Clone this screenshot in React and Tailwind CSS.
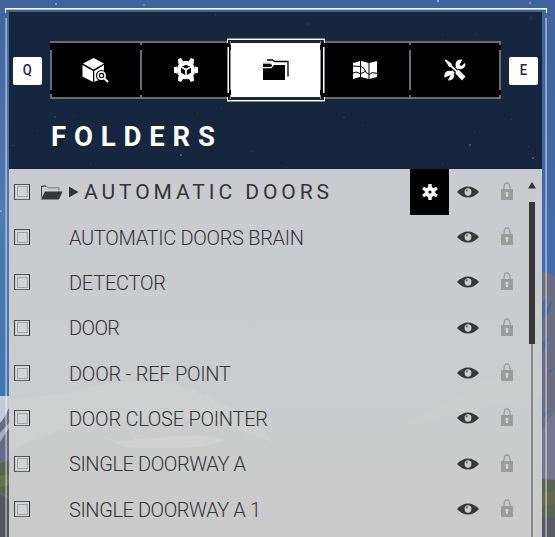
import React, { useLayoutEffect, useRef, useState } from "react";

const ROWS = [
  { label: "AUTOMATIC DOORS BRAIN", width: 234 },
  { label: "DETECTOR", width: 96 },
  { label: "DOOR", width: 50 },
  { label: "DOOR - REF POINT", width: 161 },
  { label: "DOOR CLOSE POINTER", width: 198 },
  { label: "SINGLE DOORWAY A", width: 176 },
  { label: "SINGLE DOORWAY A 1", width: 191 },
];

// Distributes letter spacing so that a label spans the given width.
function FitText({ text, width, className }) {
  const ref = useRef(null);
  const [spacing, setSpacing] = useState(0);
  useLayoutEffect(() => {
    ref.current.style.letterSpacing = "0px";
    const natural = ref.current.getBoundingClientRect().width;
    const next = (width + 1 - natural) / (text.length - 1);
    ref.current.style.letterSpacing = `${next}px`;
    setSpacing(next);
  }, [text, width]);
  return (
    <span ref={ref} className={`inline-block whitespace-nowrap ${className}`} style={{ letterSpacing: `${spacing}px` }}>
      {text}
    </span>
  );
}

function Scenery() {
  return (
    <svg className="absolute inset-0" width="555" height="537" viewBox="0 0 555 537">
      <defs>
        <linearGradient id="sky" x1="0" y1="0" x2="0" y2="1">
          <stop offset="0" stopColor="#40639d" />
          <stop offset=".45" stopColor="#436aaa" />
          <stop offset=".75" stopColor="#3b72ad" />
        </linearGradient>
        <linearGradient id="leftSky" x1="0" y1="0" x2="0" y2="1">
          <stop offset="0" stopColor="#40639d" />
          <stop offset=".5" stopColor="#5079b1" />
          <stop offset="1" stopColor="#3e77b0" />
        </linearGradient>
      </defs>
      <rect width="555" height="537" fill="url(#sky)" />
      <rect width="9" height="396" fill="url(#leftSky)" />
      <path d="M0 396h9v141H0z" fill="#686b87" />
      <path d="M0 396h9v12L4 418 0 423z" fill="#c4cbd6" />
      <path d="M0 433l9-10v5l-9 14z" fill="#a6adc0" />
      <path d="M0 463l9-3v38l-9-5z" fill="#56644b" />
      <path d="M0 476l9-2v10l-9 3z" fill="#65714f" />
      <path d="M0 494l9 5v38H0z" fill="#555560" />
      <path d="M542 272l6 1 7 4v260h-13z" fill="#6b6e83" />
      <path d="M542 302l5-5-2 13 8-11-4 15-7 6zM542 343l7-7-4 14-3 2zM543 413l8-4-7 9zM548 370l7-3-6 8z" fill="#4d6798" />
      <path d="M542 430l13-20v70h-13z" fill="#77758f" />
      <path d="M542 479l13 1v37h-13z" fill="#5a6251" />
      <path d="M542 493l13-3v14l-13 2z" fill="#65674e" />
      <path d="M542 517h13v20h-13z" fill="#595a66" />
      <g fill="#9bb0d0">
        <circle cx="56" cy="4" r="1" />
        <circle cx="144" cy="5" r=".8" />
        <circle cx="438" cy="1" r="1.2" />
        <circle cx="530" cy="3" r="1.5" opacity=".5" />
        <circle cx="1" cy="211" r="1" />
      </g>
    </svg>
  );
}

function Frame() {
  return (
    <svg className="absolute inset-0" width="555" height="537" viewBox="0 0 555 537" shapeRendering="crispEdges">
      <path d="M5 8h542v2H5z" fill="#a8b9d5" />
      <path d="M5 8h542v1H5zM5 8h1v5H5zM546 8h1v5h-1z" fill="#fff" />
      <path d="M5 18h1v519H5zM545 18h1v519h-1z" fill="#fff" opacity=".35" />
      <path d="M6 18h1v519H6zM546 18h1v519h-1z" fill="#fff" opacity=".45" />
    </svg>
  );
}

function HeaderStars() {
  return (
    <svg className="absolute inset-0" width="533" height="157" viewBox="9 12 533 157">
      <g fill="#2f3e58">
        <path d="M54 116h2v2h-2zM73 116h1v1h-1zM37 130h1v1h-1zM12 145h2v1h-2zM197 113h1v1h-1zM221 107h1v1h-1zM90 164h1v1h-1zM215 15h1v1h-1zM308 23h1v2h-1zM442 34h1v1h-1zM475 34h1v1h-1zM343 117h2v1h-2zM362 125h1v1h-1zM474 131h1v1h-1zM511 119h1v1h-1zM528 146h1v1h-1zM442 163h1v1h-1zM252 151h1v1h-1zM286 167h1v1h-1z" />
      </g>
      <path d="M180 154h2v2h-2zM469 144h2v2h-2zM532 157h2v2h-2z" fill="#5f4f55" />
      <circle cx="531" cy="18" r="2" fill="#232f4a" />
    </svg>
  );
}

function KeyCap({ children }) {
  return (
    <div className="flex h-7 w-[29px] items-center justify-center rounded-[2px] bg-white font-['Roboto','Liberation_Sans',sans-serif] text-[15.5px] leading-none font-medium text-[#1a2942]">
      <span className="inline-block scale-x-[.84]">{children}</span>
    </div>
  );
}

function SearchCube() {
  return (
    <svg className="relative left-px" width="28" height="26" viewBox="0 0 28 26" fill="#fff">
      <path d="M11.5 1L22 6.5 11.5 12.5 1 6.5z" />
      <path d="M.5 8L11 14v11L.5 19.5zM12.3 14L22 8v13l-9.7 3.7z" />
      <circle cx="19.5" cy="18.5" r="5.600" fill="#000" />
      <path d="M22 21l4 4" stroke="#fff" strokeWidth="2.2" />
      <circle cx="19.5" cy="18.5" r="3.6" fill="#000" stroke="#fff" strokeWidth="1.7" />
      <circle cx="19.5" cy="18.5" r="1.600" />
    </svg>
  );
}

function CogCube() {
  return (
    <svg className="relative left-px" width="26" height="26" viewBox="-13 -13 26 26" fill="#fff">
      <circle r="9.2" />
      <path d="M-12-2.7l3-.8v7l-3-.8zM12-2.7l-3-.8v7l3-.8zM-8-10.7l3-1.3 2.4 3.5-5 3zM8-10.7L5-12 2.6-8.5l5 3zM-8 10.7L-5 12l2.4-3.5-5-3zM8 10.7L5 12 2.6 8.5l5-3z" />
      <path d="M0-5.3l4.2 2L0-1l-4.2-2.3zM-5-2.2L-.8.2V5L-5 2.8zM5-2.2L.8.2V5L5 2.8z" fill="#000" />
      <path d="M-3-2.5L0-.8l3-1.7M0-.8v4" stroke="#fff" strokeWidth="1" fill="none" />
    </svg>
  );
}

function FoldersIcon() {
  return (
    <svg width="26" height="22" viewBox="0 0 26 22">
      <path d="M4 1h5.500l2 1.500H25V17.500" fill="none" stroke="#000" strokeWidth="1.300" />
      <path d="M0 9.300h8.500L11 6h11v15H0z" />
      <path d="M0 5h7.500l1.500.700v1.600L7.500 8H0z" />
      <path d="M0 4.200h8.300" stroke="#444" strokeWidth=".6" />
    </svg>
  );
}

function MapIcon() {
  return (
    <svg className="relative -left-px" width="26" height="20" viewBox="0 0 26 20">
      <path d="M1 3l7-2v16l-7 2zM9 1l7.500 2v16L9 17zM17.500 3L25 1v16l-7.500 2z" fill="#fff" />
      <path d="M1 6l8 .5 3 2 2 4 3.500 2 3-2 5 1M1 13l3-1 4 1.500 4-1 1.500-2" stroke="#000" strokeWidth="1" fill="none" />
    </svg>
  );
}

function ToolsIcon() {
  return (
    <svg className="relative -left-px" width="22" height="22" viewBox="0 0 22 22">
      <path d="M4 18L18 4" stroke="#fff" strokeWidth="3.400" />
      <circle cx="16.400" cy="5.400" r="4.900" fill="#fff" />
      <circle cx="5.200" cy="16.600" r="4.900" fill="#fff" />
      <path d="M15.500 6L18.500 0l3.500 3-4.500 4zM6.500 16L0 19l3.500 3z" fill="#000" />
      <path d="M2 2l17 17" stroke="#000" strokeWidth="4.500" />
      <path d="M.500 1L2 .500 7.500 4.500 8 6.500l5 5 2-.500 6.500 6.500L18 21.500l-6.500-7 .3-2L6.500 8 5 7.500z" fill="#fff" />
    </svg>
  );
}

function Tab({ children, selected }) {
  return (
    <div className={`relative flex flex-1 items-center justify-center ${selected ? "bg-white" : "bg-black"}`}>{children}</div>
  );
}

function TabFrame() {
  return (
    <svg className="pointer-events-none absolute -top-[3px] left-0" width="451" height="64" viewBox="50 38 451 64" shapeRendering="crispEdges">
      <path d="M50 41h451v2H50zM50 97h451v2H50z" fill="#696d73" />
      <path d="M50 41h2v2h-2zM50 50h2v40h-2zM50 94h2v5h-2zM140 43h2v2h-2zM140 50h2v40h-2zM140 95h2v2h-2zM409 43h2v2h-2zM409 50h2v40h-2zM409 95h2v2h-2zM499 43h2v2h-2zM499 50h2v40h-2zM499 95h2v2h-2z" fill="#696d73" />
      <path d="M227 38h98v64h-98z" fill="#000" />
      <path d="M228 40h96v3h-96zM228 97h96v3h-96z" fill="#17263f" />
      <path d="M231 43h89v54h-89z" fill="#fff" />
      <path d="M227 38h98v1h-98zM227 101h98v1h-98z" fill="#7d8490" />
      <path d="M227 39h98v1h-98zM227 100h98v1h-98zM227 39h1v4h-1zM324 39h1v4h-1zM227 97h1v4h-1zM324 97h1v4h-1zM228 47h1v46h-1zM323 47h1v46h-1z" fill="#fff" />
      <path d="M227 47h1v46h-1zM324 47h1v46h-1zM230 41h1v4h-1zM230 50h1v40h-1zM230 95h1v4h-1zM320 41h1v4h-1zM320 50h1v40h-1zM320 95h1v4h-1z" fill="#8a8e94" />
    </svg>
  );
}

function Checkbox() {
  return (
    <div className="flex h-4 w-4 items-center justify-center border border-t-[#555557] border-r-[#2e2e2e] border-b-[#666668] border-l-[#444]">
      <div className="h-[11px] w-[11px] border border-[#a2a3a5] bg-[#d2d3d4] outline-1 outline-[#d8d9da]" />
    </div>
  );
}

function Eye() {
  return (
    <svg width="22" height="12" viewBox="0 0 22 12">
      <path d="M0 6Q5 .500 11 .500T22 6q-5 5.500-11 5.500T0 6z" fill="#383838" />
      <ellipse cx="11" cy="6" rx="3.400" ry="3.700" fill="#cccdce" />
      <path d="M8.800 3.400l2 .2-.5 1.800-1.300.2z" fill="#666" />
    </svg>
  );
}

function Lock() {
  return (
    <svg width="12" height="18" viewBox="0 0 12 18">
      <path d="M2.500 8L3.700 2.300 5 1h2l1.300 1.300L9.500 8" stroke="#9b9b9c" strokeWidth="1.300" fill="none" />
      <rect y="7" width="12" height="11" rx=".7" fill="#9b9b9c" />
      <path d="M6 9.800a1.700 1.700 0 0 1 1 3V15H5v-2.200a1.700 1.700 0 0 1 1-3z" fill="#d2d2d3" />
    </svg>
  );
}

function OpenFolder() {
  return (
    <svg width="22" height="15" viewBox="0 0 22 15">
      <path d="M.500 13V1.500h5l1.500 1.300h11V7" fill="none" stroke="#777" strokeWidth="1" />
      <path d="M.500 11V1H5" fill="none" stroke="#3b3b3b" />
      <path d="M4 6.500h17.500L18 14.500H0z" fill="#383838" />
    </svg>
  );
}

function Gear() {
  return (
    <svg width="16" height="16" viewBox="-8 -8 16 16" fill="#fff">
      <circle r="5.300" />
      <path d="M-1.600-8h3.200L2-4h-4zM-1.600 8h3.200L2 4h-4zM6.200-5.300l1.600 2.700-3.300 2L2.700-3.500zM-6.200-5.300l-1.600 2.700 3.300 2 1.800-2.900zM6.200 5.300l1.600-2.700-3.300-2L2.700 3.500zM-6.200 5.300l-1.600-2.700 3.300-2 1.800 2.900z" />
      <circle r="1.600" fill="#000" />
    </svg>
  );
}

function RowShell({ children, settings }) {
  return (
    <div className="flex h-[45.350px] shrink-0 items-center pl-[5px]">
      <Checkbox />
      <div className="flex h-full flex-1 items-center pt-px">{children}</div>
      <div className={`flex h-[46px] w-[39px] items-center justify-center self-start ${settings ? "bg-black" : ""}`}>
        {settings && <Gear />}
      </div>
      <div className="ml-2 flex w-[22px]"><Eye /></div>
      <div className="mr-[10px] ml-[22px] flex pb-[2px]"><Lock /></div>
    </div>
  );
}

function ListBackdrop() {
  return (
    <svg className="absolute inset-0" width="533" height="368" viewBox="9 169 533 368">
      <defs>
        <linearGradient id="list" x1="0" y1="0" x2="0" y2="1">
          <stop offset="0" stopColor="#cacbcf" />
          <stop offset=".6" stopColor="#cbcccd" />
          <stop offset="1" stopColor="#cacaca" />
        </linearGradient>
      </defs>
      <path d="M9 169h533v368H9z" fill="url(#list)" />
      <path d="M9 399l55-5 28-8 35-5 46 2 28 10 40 20 35 30-50-17-60-7-45 4-61 7-51 20z" fill="#cecfcf" />
      <path d="M94 432l22 9 40-3 45-3 26 5-25 7-40 1-37-1z" fill="#d1d1d1" />
      <path d="M190 389l20 19M206 393l22 29M224 405l25 30M130 430l9 13" stroke="#d2d3d4" fill="none" />
      <path d="M395 430l90-50 57-8v25l-72 13z" fill="#cdcdcd" opacity=".5" />
    </svg>
  );
}

export default function App() {
  return (
    <div className="relative h-[537px] w-[555px] overflow-hidden bg-[#40639d] font-['Roboto','Liberation_Sans',sans-serif] text-[#353536]">
      <Scenery />
      <Frame />
      <main className="relative mt-3 ml-[9px] flex h-[525px] w-[533px] flex-col">
        <header className="relative h-[157px] shrink-0 bg-[#17263f]">
          <HeaderStars />
          <div className="relative flex items-center gap-2 pt-[29px] pl-1">
            <div className="flex pt-[2px]"><KeyCap>Q</KeyCap></div>
            <nav className="relative flex h-[58px] w-[451px]">
              <Tab><SearchCube /></Tab>
              <Tab><CogCube /></Tab>
              <Tab selected />
              <Tab><MapIcon /></Tab>
              <Tab><ToolsIcon /></Tab>
              <TabFrame />
              <div className="absolute inset-0 flex items-center justify-center"><FoldersIcon /></div>
            </nav>
            <div className="flex pt-[2px]"><KeyCap>E</KeyCap></div>
          </div>
          <h1 className="relative mt-[23px] ml-[42px] flex leading-[30px]">
            <FitText text="FOLDERS" width={163} className="text-[27.500px] font-bold text-white" />
          </h1>
        </header>
        <section className="relative flex flex-1 overflow-hidden">
          <ListBackdrop />
          <div className="relative flex w-[514px] flex-col">
            <RowShell settings>
              <div className="ml-[11px]"><OpenFolder /></div>
              <svg className="ml-[6px]" width="10" height="12" viewBox="0 0 10 12"><path d="M0 .500L9.500 6 0 11.500z" fill="#353536" /></svg>
              <div className="ml-[5px] flex leading-6"><FitText text="AUTOMATIC DOORS" width={244} className="text-[21px] font-normal" /></div>
            </RowShell>
            {ROWS.map((row) => (
              <RowShell key={row.label}>
                <div className="ml-[39px] flex leading-6"><FitText text={row.label} width={row.width} className="text-[20px] font-light" /></div>
              </RowShell>
            ))}
          </div>
          <div className="relative ml-[4px] flex w-[9px] flex-col items-center pt-[13px]">
            <svg className="shrink-0" width="8" height="7" viewBox="0 0 8 7"><path d="M4 0l4 6.500H0z" fill="#353536" /></svg>
            <div className="mt-[13px] h-[142px] w-[6px] shrink-0 bg-[#383838]" />
            <div className="w-[2px] flex-1 bg-[#88898a]" />
          </div>
        </section>
      </main>
    </div>
  );
}
